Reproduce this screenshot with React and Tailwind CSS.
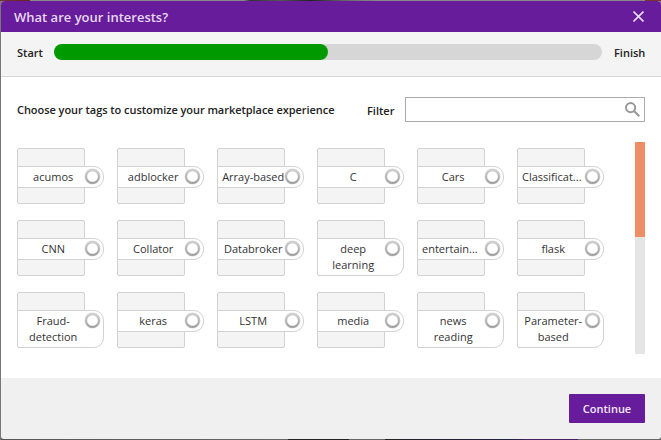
const TAGS = [
  ['acumos'],
  ['adblocker'],
  ['Array-based'],
  ['C'],
  ['Cars'],
  ['Classificat...'],
  ['CNN'],
  ['Collator'],
  ['Databroker'],
  ['deep', 'learning'],
  ['entertain...'],
  ['flask'],
  ['Fraud-', 'detection'],
  ['keras'],
  ['LSTM'],
  ['media'],
  ['news', 'reading'],
  ['Parameter-', 'based'],
];

function RadioRing() {
  return (
    <svg className="absolute right-[2px] top-[1px] size-[17px]" viewBox="0 0 17 17" fill="none">
      <defs>
        <linearGradient id="ring" x1="0" y1="0" x2="0" y2="1">
          <stop offset="0" stopColor="#cfcfcf" />
          <stop offset="1" stopColor="#a0a0a0" />
        </linearGradient>
      </defs>
      <circle cx="8.5" cy="8.5" r="7.4" stroke="#dadada" strokeWidth="1.2" />
      <circle cx="8.5" cy="8.5" r="6.4" fill="#fff" stroke="url(#ring)" strokeWidth="2.1" />
    </svg>
  );
}

function Tag({ lines }) {
  const tall = lines.length > 1;
  // Truncated labels start at the left padding instead of being centred.
  const truncated = lines[0].endsWith('...');
  return (
    <div className="h-14 w-[68px] rounded-[2px] border border-[#d2d2d2] bg-[#f4f4f4] pt-[17px]">
      <div
        className={`relative -ml-px w-[87px] border border-[#d2d2d2] bg-white pt-[2px] text-center text-[11px] leading-4 text-[#333] ${
          tall ? 'h-[38px] rounded-r-[10px] rounded-bl-[2px]' : 'h-[22px] rounded-r-[10px]'
        } ${truncated ? 'pl-1' : 'pr-[14.6px]'}`}
      >
        {lines.map((line) => (
          <div key={line} className={`flex whitespace-nowrap ${truncated ? 'justify-start' : 'justify-center'}`}>
            {line}
          </div>
        ))}
        <RadioRing />
      </div>
    </div>
  );
}

export default function App() {
  return (
    <div className="h-[440px] w-[661px] overflow-hidden bg-[#777] bg-[linear-gradient(90deg,#733_0px,#622_30px,#888_30px,#888_244px,#333_250px,#555_280px,#222_310px,#666_345px,#888_376px,#888_645px,#733_645px)] bg-[length:661px_1px] bg-no-repeat pl-px pt-px font-['Open_Sans','Noto_Sans',sans-serif]">
      <div className="flex h-[438px] w-[660px] flex-col overflow-hidden rounded-[4px] bg-white">
        <header className="flex h-[31px] shrink-0 items-center justify-between bg-[#671c9b] pl-[13px] pr-[17px]">
          <h1 className="text-[13px] font-semibold leading-5 text-[#e6d9ee]">What are your interests?</h1>
          <svg className="size-[11px]" viewBox="0 0 11 11" stroke="#e9ddf0" strokeWidth="1.6">
            <path d="M.5 .5L10.5 10.5M10.5 .5L.5 10.5" />
          </svg>
        </header>

        <section className="flex h-[45px] shrink-0 border-b border-[#d7d7d7] bg-[#f4f4f4] pl-4 pt-3 text-[11px] font-semibold leading-[18px] text-[#222]">
          <span className="w-[37px]">Start</span>
          <div className="h-4 w-[548px] rounded-full bg-[#d6d6d6]">
            <div className="h-4 w-1/2 rounded-full bg-[#009900]" />
          </div>
          <span className="ml-3">Finish</span>
        </section>

        <main className="flex h-[301px] shrink-0 flex-col pl-4 pr-4 pt-5">
          <div className="flex h-[26px] shrink-0 text-[11px] font-semibold leading-[26px] text-[#222]">
            <p className="w-[350px] whitespace-nowrap tracking-[-0.05px]">Choose your tags to customize your marketplace experience</p>
            <label className="w-[38px] pt-px">Filter</label>
            <div className="flex h-[25px] w-60 shrink-0 justify-end border border-[#aaa] pr-[4px] pt-1">
              <svg className="size-[15px]" viewBox="0 0 15 15" fill="none" stroke="#999">
                <circle cx="5.6" cy="5.6" r="4.6" strokeWidth="2" />
                <path d="M9 9L14.2 14.2" strokeWidth="2.2" />
              </svg>
            </div>
          </div>
          <div className="mt-[19px] flex h-[212px] justify-between">
            <div className="grid w-[600px] auto-rows-[56px] grid-cols-6 gap-y-4 pt-1.5">
              {TAGS.map((lines) => (
                <Tag key={lines.join()} lines={lines} />
              ))}
            </div>
            <div className="w-2.5 bg-[#e5e5e5]">
              <div className="h-[95px] bg-[#ef8d67]" />
            </div>
          </div>
        </main>

        <footer className="flex grow items-start justify-end bg-[#f0f0f0] pr-4 pt-4">
          <button className="h-[29px] w-[76px] rounded-[1px] bg-[#671c9b] text-[11px] font-semibold leading-[29px] text-[#f2e9f7]">
            Continue
          </button>
        </footer>
      </div>
      <div className="h-px bg-[linear-gradient(90deg,#555_0px,#666_287px,#222_287px,#222_348px,#666_348px,#666_384px,#222_384px,#224_515px,#426_525px,#426_577px,#666_577px)]" />
    </div>
  );
}
